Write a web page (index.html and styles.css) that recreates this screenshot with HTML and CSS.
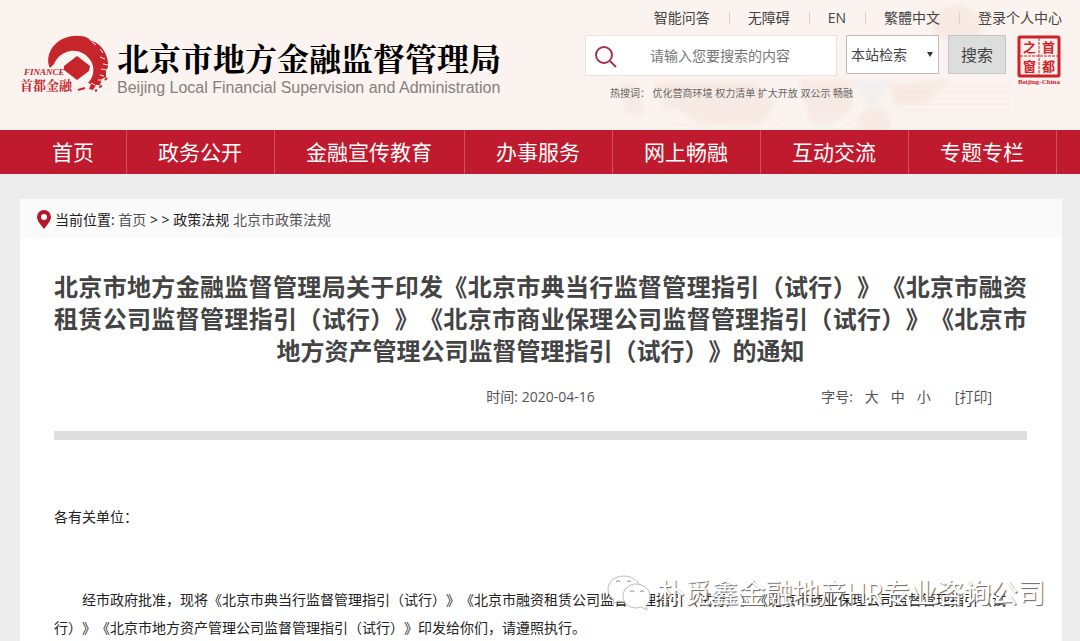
FILE: index.html
```html
<!DOCTYPE html>
<html lang="zh-CN">
<head>
<meta charset="utf-8">
<title>北京市地方金融监督管理局</title>
<link rel="stylesheet" href="styles.css">
</head>
<body>
<header class="header">
  <svg class="header-art" viewBox="0 0 580 130" preserveAspectRatio="xMaxYMid slice" aria-hidden="true">
    <defs><filter id="soft"><feGaussianBlur stdDeviation="2"/></filter></defs>
    <g fill="#f7e6de" opacity=".7" filter="url(#soft)">
      <path d="M155 82h100l22 20-15 22h-60l-20-14-17-2z"/>
      <path d="M300 80h50l5 25-20 18h-22zM120 84h20l6 30h-16z"/>
      <circle cx="375" cy="122" r="16"/>
      <path d="M430 12l30-8 25 14-8 24-42-4zM390 84l60-4-25 24h-30z"/>
    </g>
    <path d="M350 80h44l-20 28z" fill="#ecebf0" opacity=".5" filter="url(#soft)"/>
    <g fill="none" stroke="#f7e6dd" stroke-width="1" opacity=".6">
      <path d="M170 122q40 10 60-6t50 8 80-6M400 86h110M400 92h110M400 98h110M400 104h110M400 110h110"/>
    </g>
  </svg>
  <a class="brand" href="#">
    <svg class="brand-logo" viewBox="0 0 90 60" role="img" aria-label="首都金融">
      <path fill="#c6252c" d="M30 34C25 24 31 9 45 4c7-3 17-3 23 0l3 3 4 1c9 5 14 16 13 25l-2 4 0 6-4 2-2 6-4 0-3 5-4-1 2-5-3-1c5-5 7-13 4-20-4-8-12-13-21-12-8 1-14 6-17 13z"/>
      <path fill="#c6252c" d="M57 22l13 10-1 5-12 9-13-10v-4z"/>
      <path d="M72 8l4 3M80 15l3 4M85 25l-5-2M87 36l-6-1M78 46l6 0M75 51l-4-2M83 30l5 1M80 41l4 1" stroke="#faf3ef" stroke-width="1" fill="none"/>
      <path d="M58 56l7-2M79 53l3-1M75 57l2-1M85 46l2-2" stroke="#c6252c" stroke-width="2"/>
      <text class="logo-en" x="4" y="41">FINANCE</text>
      <text class="logo-cn" x="0" y="56">首都金融</text>
    </svg>
    <span class="brand-text">
      <span class="brand-name">北京市地方金融监督管理局</span>
      <span class="brand-en">Beijing Local Financial Supervision and Administration</span>
    </span>
  </a>
  <div class="tools">
    <nav class="top-links" aria-label="快捷链接">
      <a href="#">智能问答</a><a href="#">无障碍</a><a href="#">EN</a><a href="#">繁體中文</a><a href="#">登录个人中心</a>
    </nav>
    <div class="search-row">
      <form class="search">
        <label class="search-box">
          <svg class="search-icon" viewBox="0 0 24 24" aria-hidden="true"><circle cx="10" cy="11" r="8"/><path d="M16 17l6 6"/></svg>
          <input class="search-input" type="text" placeholder="请输入您要搜索的内容" aria-label="搜索内容">
        </label>
        <span class="scope-wrap"><select class="scope" aria-label="检索范围"><option>本站检索</option></select></span>
        <button class="search-button" type="submit">搜索</button>
      </form>
      <a class="seal" href="#">
        <svg viewBox="0 0 48 50" role="img" aria-label="首都之窗">
          <rect x="5" y="2" width="40" height="39" rx="1" fill="#fdf1ee" stroke="#cf2228" stroke-width="3"/>
          <path d="M25 3v37M6 21h38" stroke="#cf2228" stroke-width="1" stroke-dasharray="3 1"/>
          <text class="seal-char" x="9" y="17">之</text><text class="seal-char" x="28" y="17">首</text>
          <text class="seal-char" x="9" y="36">窗</text><text class="seal-char" x="28" y="36">都</text>
          <text class="seal-en" x="25" y="49">Beijing-China</text>
        </svg>
      </a>
    </div>
    <p class="hot">热搜词： <a href="#">优化营商环境</a> <a href="#">权力清单</a> <a href="#">扩大开放</a> <a href="#">双公示</a> <a href="#">畅融</a></p>
  </div>
</header>
<nav class="main-nav" aria-label="主导航">
  <a href="#">首页</a><a href="#">政务公开</a><a href="#">金融宣传教育</a><a href="#">办事服务</a><a href="#">网上畅融</a><a href="#">互动交流</a><a href="#">专题专栏</a>
</nav>
<main class="page">
  <nav class="crumbs" aria-label="当前位置">
    <svg class="pin" viewBox="0 0 14 19" aria-hidden="true"><path fill="#b5182c" fill-rule="evenodd" d="M7 0a7 7 0 0 1 7 7c0 4-4 8-7 12C4 15 0 11 0 7a7 7 0 0 1 7-7zm0 4a3 3 0 1 0 0 6 3 3 0 0 0 0-6z"/></svg>
    <span>当前位置: <a href="#">首页</a> &gt; &gt; 政策法规 <a href="#">北京市政策法规</a></span>
  </nav>
  <article class="article">
    <h1 class="title">北京市地方金融监督管理局关于印发《北京市典当行监督管理指引（试行）》《北京市融资租赁公司监督管理指引（试行）》《北京市商业保理公司监督管理指引（试行）》《北京市地方资产管理公司监督管理指引（试行）》的通知</h1>
    <div class="meta">
      <time datetime="2020-04-16">时间: 2020-04-16</time>
      <div class="meta-tools"><span>字号:</span><button type="button">大</button><button type="button">中</button><button type="button">小</button><button class="print" type="button">[打印]</button></div>
    </div>
    <div class="body">
      <p class="greeting">各有关单位：</p>
      <p class="paragraph">经市政府批准，现将《北京市典当行监督管理指引（试行）》《北京市融资租赁公司监督管理指引（试行）》《北京市商业保理公司监督管理指引（试行）》《北京市地方资产管理公司监督管理指引（试行）》印发给你们，请遵照执行。</p>
    </div>
  </article>
</main>
<div class="watermark">
  <svg class="wechat" viewBox="0 0 46 36" aria-hidden="true">
    <g fill="#fff" stroke="#bbb" stroke-width="1">
      <path d="M17 1C8 1 1 7 1 14c0 4 2 8 6 10l-1 5 5-3c12 3 22-2 22-12C33 7 26 1 17 1z"/>
      <path d="M29 9c-7 0-13 5-13 12s6 12 13 12l5-1 6 3-1-5c3-2 4-5 4-9 0-7-7-12-14-12z"/>
    </g>
    <path d="M9 7q2-3 4 0M20 7q2-3 4 0M23 17q2-3 4 0M33 17q2-3 4 0" fill="none" stroke="#888"/>
  </svg>
  <span>朴觅鑫金融地产HR专业咨询公司</span>
</div>
</body>
</html>
```
FILE: styles.css
```css
* { box-sizing: border-box; }
body {
  margin: 0;
  height: 100vh;
  overflow: hidden;
  display: flex;
  flex-direction: column;
  position: relative;
  background: #ededed;
  color: #222;
  font: 14px/20px "Open Sans", "Noto Sans CJK SC", sans-serif;
  text-spacing-trim: space-all;
}
a { color: inherit; text-decoration: none; }
p, h1 { margin: 0; }
button, input, select { font: inherit; color: inherit; }

.header {
  position: relative;
  flex: none;
  display: flex;
  justify-content: space-between;
  height: 130px;
  padding: 0 18px 0 20px;
  background: #faf3ef;
}
.header-art { position: absolute; right: 0; top: 0; width: 54%; height: 100%; }
.brand { position: relative; display: flex; gap: 7px; padding-top: 34px; }
.brand-logo { width: 90px; height: 60px; }
.logo-en { font: italic bold 9px "Liberation Serif", serif; fill: #c6252c; }
.logo-cn { font: bold 13px "Noto Serif CJK SC", "Noto Sans CJK SC", serif; fill: #c6252c; }
.brand-text { display: flex; flex-direction: column; padding-top: 3px; white-space: nowrap; }
.brand-name { font: bold 32px/40px "Noto Serif CJK SC", "Noto Sans CJK SC", serif; color: #000; }
.brand-en { font: 16px/22px "Liberation Sans", sans-serif; color: #85807d; }

.tools { position: relative; width: 477px; padding-top: 8px; color: #444; }
.top-links { display: flex; justify-content: flex-end; }
.top-links a + a { margin-left: 19px; padding-left: 19px; background: linear-gradient(#e0cfcb, #e0cfcb) 0 4px / 1px 13px no-repeat; }
.search-row { display: flex; justify-content: space-between; padding-top: 7px; }
.search { display: flex; gap: 9px; }
.search-box { display: flex; align-items: center; width: 252px; height: 41px; padding-left: 8px; background: #fff; border: 1px solid #eae2de; }
.search-icon { width: 24px; height: 24px; fill: none; stroke: #a3344f; stroke-width: 2; }
.search-input { flex: 1; min-width: 0; padding: 0 0 0 32px; border: 0; outline: 0; background: none; }
.search-input::placeholder { color: #777; opacity: 1; }
.scope-wrap { position: relative; }
.scope-wrap::after { content: ""; position: absolute; right: 6px; top: 17px; border: 3px solid transparent; border-top: 5px solid #333; border-bottom: 0; }
.scope { width: 93px; height: 39px; padding: 0 0 0 4px; appearance: none; background: #fff; border: 1px solid #bbb; border-radius: 1px; }
.search-button { width: 58px; height: 39px; padding: 0; font-size: 16px; background: #dcdddd; border: 1px solid #c5c5c5; }
.seal { width: 48px; height: 50px; }
.seal svg { display: block; width: 100%; height: 100%; }
.seal-char { font: bold 13px "Noto Sans CJK SC", sans-serif; fill: #cf2228; }
.seal-en { font: bold 7px "Liberation Serif", serif; fill: #cf2228; text-anchor: middle; }
.hot { padding-left: 25px; font-size: 10px; line-height: 16px; color: #666; }

.main-nav { flex: none; display: flex; height: 44px; padding-left: 21px; background: #bf1a2d; color: #fff; font-size: 21px; line-height: 44px; }
.main-nav a { padding: 0 32px 0 31px; border-right: 1px solid #cf5261; white-space: nowrap; }

.page { flex: 1; margin: 25px 18px 0 20px; background: #fff; }
.crumbs { display: flex; align-items: center; gap: 4px; height: 39px; padding: 2px 17px 0; background: #fafafa; }
.crumbs a { color: #555; }
.pin { width: 14px; height: 19px; }
.article { padding: 32px 35px 0 34px; }
.title { font: bold 24px/32px "Noto Sans CJK SC", sans-serif; color: #444; text-align: justify; text-align-last: center; }
.meta { display: grid; grid-template-columns: 1fr auto 1fr; padding: 21px 35px 0; color: #555; }
.meta time { grid-column: 2; }
.meta-tools { display: flex; justify-content: flex-end; gap: 12px; }
.meta button { padding: 0; border: 0; background: none; }
.meta .print { margin-left: 12px; }
.body { margin-top: 24px; padding-top: 63px; border-top: 9px solid #dedede; line-height: 28px; }
.paragraph { margin-top: 55px; text-indent: 2em; }

.watermark {
  position: absolute;
  right: 35px;
  bottom: 28px;
  display: flex;
  align-items: center;
  gap: 4px;
  color: #fff;
  font-size: 27px;
  line-height: 40px;
  text-shadow: 1px 1px 1px #666;
}
.wechat { width: 46px; height: 36px; }
```
